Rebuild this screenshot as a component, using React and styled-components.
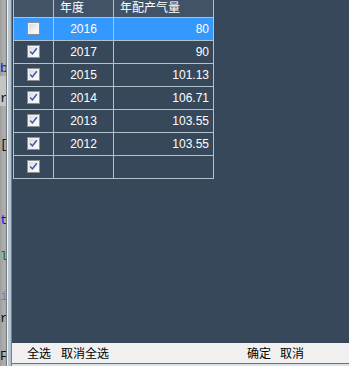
import React from "react";
import styled, { createGlobalStyle } from "styled-components";

const GlobalStyle = createGlobalStyle`
  html, body {
    margin: 0;
    padding: 0;
    overflow: hidden;
    background: #37485a;
  }
  body {
    font-family: "Noto Sans CJK SC", "Liberation Sans", sans-serif;
  }
`;

const color = {
  panel: "#37485a",
  header: "#425367",
  grid: "#b2c2cc",
  selected: "#3399ff",
  bar: "#f0f0f0",
};

const Screen = styled.div`
  display: flex;
  width: 349px;
  height: 366px;
  overflow: hidden;
`;

const EditorStrip = styled.div`
  display: flex;
  flex-direction: column;
  width: 6px;
  flex: none;
  overflow: hidden;
  background: linear-gradient(to right, #9e9e9e, #b0b0b0 70%, #a4a4a4);
  font-family: "Liberation Mono", monospace;
  font-size: 13px;
`;

const CodeLine = styled.div`
  height: ${(p) => p.$h}px;
  line-height: 14px;
  display: flex;
  align-items: flex-end;
  color: ${(p) => p.$color || "#111"};
  white-space: nowrap;
  background: ${(p) => p.$bg || "transparent"};
`;

const Frame = styled.div`
  width: 6px;
  flex: none;
  box-sizing: border-box;
  border-left: 1px solid #7a7a7a;
  border-right: 1px solid #6f8396;
  background: linear-gradient(to right, #eef2f6 0, #eef2f6 1px, #bccbd8 1px, #aebfcf);
`;

const Panel = styled.div`
  flex: 1;
  display: flex;
  flex-direction: column;
  background: ${color.panel};
`;

const TableArea = styled.div`
  flex: 1;
  padding-left: 1px;
`;

const Grid = styled.table`
  border-collapse: collapse;
  table-layout: fixed;
  width: 201px;
  color: #fff;
  font-size: 12px;
  font-family: "Noto Sans CJK SC", "Liberation Sans", sans-serif;
`;

const HeadCell = styled.th`
  height: 17px;
  padding: 0 0 0 6px;
  text-align: left;
  font-weight: normal;
  background: ${color.header};
  border-left: 1px solid ${color.grid};
  border-right: 1px solid ${color.grid};
  border-bottom: 1px solid ${color.grid};
  line-height: 14px;
  vertical-align: top;
`;

const Row = styled.tr`
  background: ${(p) => (p.$selected ? color.selected : "transparent")};
`;

const Cell = styled.td`
  height: 22px;
  padding: 0 ${(p) => (p.$align === "right" ? 4 : 0)}px 0 0;
  text-align: ${(p) => p.$align || "center"};
  border: 1px solid ${color.grid};
  font-family: "Liberation Sans", "Noto Sans CJK SC", sans-serif;
  font-size: 12px;
  line-height: 22px;
  vertical-align: middle;
`;

const Box = styled.span`
  display: inline-flex;
  align-items: center;
  justify-content: center;
  box-sizing: border-box;
  width: 13px;
  height: 13px;
  margin-top: 4px;
  border: 1px solid #8e8f8f;
  background: linear-gradient(135deg, #d6d8db, #f6f6f6 70%, #ffffff);
  box-shadow: inset 0 0 0 1px #f4f4f4;
  vertical-align: top;
`;

const ButtonBar = styled.div`
  display: flex;
  justify-content: space-between;
  align-items: center;
  height: 20px;
  padding: 0 45px 0 15px;
  background: ${color.bar};
  border-bottom: 1px solid #5d7690;
  font-size: 12px;
  color: #000;
`;

const ButtonGroup = styled.div`
  display: flex;
  gap: ${(p) => p.$gap}px;
`;

const TextButton = styled.span`
  cursor: pointer;
  line-height: 20px;
`;

const BarFoot = styled.div`
  height: 2px;
  background: #dbe3ea;
`;

const Checkbox = ({ checked }) => (
  <Box>
    {checked && (
      <svg width="9" height="9" viewBox="0 0 9 9">
        <path d="M1.2 4.6 L3.4 6.9 L7.8 1.2" fill="none" stroke="#3a58a8" strokeWidth="1.5" />
      </svg>
    )}
  </Box>
);

const codeLines = [
  { h: 76, ch: "b", color: "#1010e0" },
  { h: 30, ch: "r", bg: "#c4c4c4" },
  { h: 46, ch: "[" },
  { h: 76, ch: "t", color: "#1010e0" },
  { h: 36, ch: "l", color: "#107010" },
  { h: 40, ch: "i", color: "#7080b0" },
  { h: 22, ch: "r" },
  { h: 38, ch: "F" },
];

const rows = [
  { year: "2016", value: "80", checked: false, selected: true },
  { year: "2017", value: "90", checked: true },
  { year: "2015", value: "101.13", checked: true },
  { year: "2014", value: "106.71", checked: true },
  { year: "2013", value: "103.55", checked: true },
  { year: "2012", value: "103.55", checked: true },
  { year: "", value: "", checked: true },
];

const App = () => {
  return (
    <Screen>
      <GlobalStyle />
      <EditorStrip>
        {codeLines.map((l, i) => (
          <CodeLine key={i} $h={l.h} $color={l.color} $bg={l.bg}>
            {l.ch}
          </CodeLine>
        ))}
      </EditorStrip>
      <Frame />
      <Panel>
        <TableArea>
          <Grid>
            <colgroup>
              <col style={{ width: 40 }} />
              <col style={{ width: 60 }} />
              <col style={{ width: 100 }} />
            </colgroup>
            <thead>
              <tr>
                <HeadCell />
                <HeadCell>年度</HeadCell>
                <HeadCell>年配产气量</HeadCell>
              </tr>
            </thead>
            <tbody>
              {rows.map((r, i) => (
                <Row key={i} $selected={r.selected}>
                  <Cell>
                    <Checkbox checked={r.checked} />
                  </Cell>
                  <Cell>{r.year}</Cell>
                  <Cell $align="right">{r.value}</Cell>
                </Row>
              ))}
            </tbody>
          </Grid>
        </TableArea>
        <ButtonBar>
          <ButtonGroup $gap={10}>
            <TextButton>全选</TextButton>
            <TextButton>取消全选</TextButton>
          </ButtonGroup>
          <ButtonGroup $gap={9}>
            <TextButton>确定</TextButton>
            <TextButton>取消</TextButton>
          </ButtonGroup>
        </ButtonBar>
        <BarFoot />
      </Panel>
    </Screen>
  );
};

export default App;
